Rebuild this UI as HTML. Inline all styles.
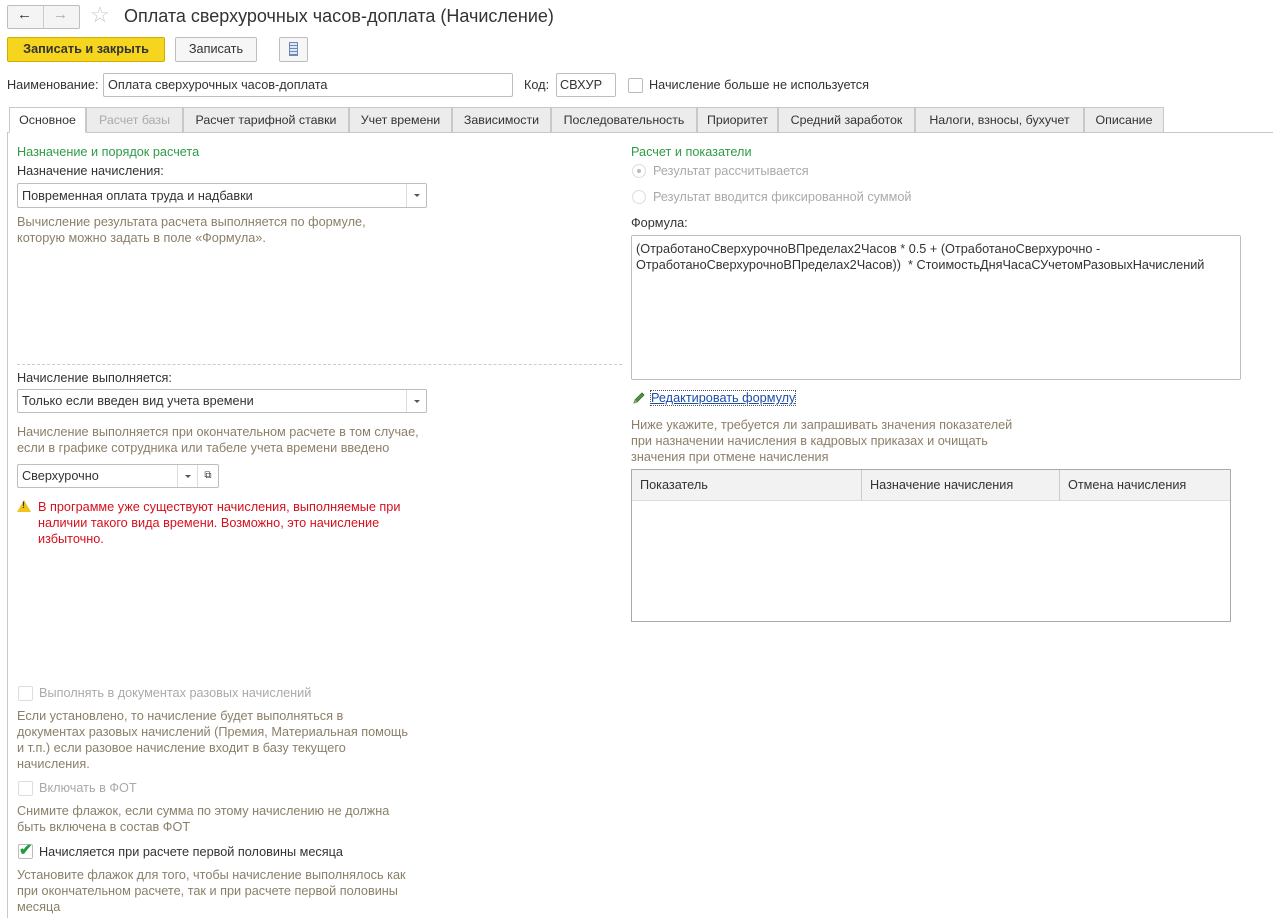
<!DOCTYPE html>
<html><head><meta charset="utf-8"><style>
*{box-sizing:border-box;margin:0;padding:0}
body{width:1273px;height:918px;background:#fff;font-family:"Liberation Sans",Arial,sans-serif;font-size:12.7px;color:#333;position:relative;overflow:hidden}
.a{position:absolute;white-space:nowrap}
.box{position:absolute;border:1px solid #bdbdbd;border-radius:2px;background:#fff}
.g{color:#8b7f68}
.gr{color:#2e9b48}
.dis{color:#aaa}
.red{color:#d6101e}
.tab{position:absolute;top:107px;height:26px;border:1px solid #c8c8c8;background:#ececec;text-align:center;line-height:24px;color:#333;font-size:12.4px}
.cb{position:absolute;width:15px;height:15px;border:1px solid #bbb;border-radius:2px;background:#fff}
.dd{position:absolute;top:0;right:0;width:20px;height:100%;border-left:1px solid #ddd}
.dd:after{content:"";position:absolute;left:7px;top:10px;border-left:3px solid transparent;border-right:3px solid transparent;border-top:3px solid #555}
</style></head><body>
<div class="box" style="left:7px;top:5px;width:73px;height:24px;background:#f4f4f4"></div>
<div class="a" style="left:43px;top:6px;width:1px;height:22px;background:#ccc"></div>
<div class="a" style="left:17px;top:6px;font-size:15px;font-weight:bold;color:#333">&#8592;</div>
<div class="a" style="left:53px;top:6px;font-size:15px;font-weight:bold;color:#aaa">&#8594;</div>
<div class="a" style="left:90px;top:2px;font-size:22px;color:#c8c8c8">&#9734;</div>
<div class="a" style="left:124px;top:6px;font-size:18px;color:#333">Оплата сверхурочных часов-доплата (Начисление)</div>
<div class="a" style="left:7px;top:37px;width:158px;height:25px;background:#f6d51e;border:1px solid #d1ad00;border-radius:2px;text-align:center;line-height:23px;font-weight:bold;color:#333">Записать и закрыть</div>
<div class="box" style="left:175px;top:37px;width:82px;height:25px;text-align:center;line-height:23px;background:#f6f6f6">Записать</div>
<div class="box" style="left:279px;top:37px;width:29px;height:25px;background:#f6f6f6"></div>
<div class="a" style="left:289px;top:42px;width:9px;height:14px;border:1px solid #6b88b6;background:repeating-linear-gradient(#dfe8f5 0 2px,#6b88b6 2px 3px)"></div>
<div class="a" style="left:7px;top:78px">Наименование:</div>
<div class="box" style="left:103px;top:73px;width:410px;height:24px;padding:4px 4px;color:#333">Оплата сверхурочных часов-доплата</div>
<div class="a" style="left:524px;top:78px">Код:</div>
<div class="box" style="left:556px;top:73px;width:60px;height:24px;padding:4px 3px">СВХУР</div>
<div class="cb" style="left:628px;top:78px"></div>
<div class="a" style="left:649px;top:78px">Начисление больше не используется</div>
<div class="a" style="left:7px;top:132px;width:1266px;height:1px;background:#c8c8c8"></div>
<div class="a" style="left:7px;top:132px;width:1px;height:786px;background:#c8c8c8"></div>
<div class="tab" style="left:9px;width:77px;background:#fff;border-bottom-color:#fff">Основное</div>
<div class="tab dis" style="left:86px;width:97px;color:#aaa">Расчет базы</div>
<div class="tab" style="left:183px;width:166px">Расчет тарифной ставки</div>
<div class="tab" style="left:349px;width:103px">Учет времени</div>
<div class="tab" style="left:452px;width:99px">Зависимости</div>
<div class="tab" style="left:551px;width:146px">Последовательность</div>
<div class="tab" style="left:697px;width:81px">Приоритет</div>
<div class="tab" style="left:778px;width:137px">Средний заработок</div>
<div class="tab" style="left:915px;width:169px">Налоги, взносы, бухучет</div>
<div class="tab" style="left:1084px;width:80px">Описание</div>
<div class="a gr" style="left:17px;top:145px">Назначение и порядок расчета</div>
<div class="a" style="left:17px;top:164px">Назначение начисления:</div>
<div class="box" style="left:17px;top:183px;width:410px;height:25px;padding:5px 4px">Повременная оплата труда и надбавки<div class="dd"></div></div>
<div class="a g" style="left:17px;top:214px;line-height:16px">Вычисление результата расчета выполняется по формуле,<br>которую можно задать в поле «Формула».</div>
<div class="a" style="left:17px;top:364px;width:605px;border-top:1px dashed #ccc"></div>
<div class="a" style="left:17px;top:371px">Начисление выполняется:</div>
<div class="box" style="left:17px;top:389px;width:410px;height:24px;padding:4px 4px">Только если введен вид учета времени<div class="dd"></div></div>
<div class="a g" style="left:17px;top:424px;line-height:16px">Начисление выполняется при окончательном расчете в том случае,<br>если в графике сотрудника или табеле учета времени введено</div>
<div class="box" style="left:17px;top:464px;width:202px;height:24px;padding:4px 4px">Сверхурочно<div class="dd" style="right:21px"></div><div style="position:absolute;right:0;top:0;width:21px;height:100%;border-left:1px solid #ddd;text-align:center;font-size:10px;line-height:22px">&#10697;</div></div>
<div class="a" style="left:17px;top:500px;width:0;height:0;border-left:7px solid transparent;border-right:7px solid transparent;border-bottom:12px solid #f0c419"></div>
<div class="a" style="left:22px;top:500px;font-size:9px;font-weight:bold">!</div>
<div class="a red" style="left:38px;top:499px;line-height:16px">В программе уже существуют начисления, выполняемые при<br>наличии такого вида времени. Возможно, это начисление<br>избыточно.</div>
<div class="cb" style="left:18px;top:686px;border-color:#ddd"></div>
<div class="a dis" style="left:39px;top:686px">Выполнять в документах разовых начислений</div>
<div class="a g" style="left:17px;top:708px;line-height:16px">Если установлено, то начисление будет выполняться в<br>документах разовых начислений (Премия, Материальная помощь<br>и т.п.) если разовое начисление входит в базу текущего<br>начисления.</div>
<div class="cb" style="left:18px;top:781px;border-color:#ddd"></div>
<div class="a dis" style="left:39px;top:781px">Включать в ФОТ</div>
<div class="a g" style="left:17px;top:803px;line-height:16px">Снимите флажок, если сумма по этому начислению не должна<br>быть включена в состав ФОТ</div>
<div class="cb" style="left:18px;top:844px"></div>
<div class="a" style="left:19px;top:840px;color:#1e9b3a;font-size:16px;font-weight:bold">&#10004;</div>
<div class="a" style="left:39px;top:845px">Начисляется при расчете первой половины месяца</div>
<div class="a g" style="left:17px;top:867px;line-height:16px">Установите флажок для того, чтобы начисление выполнялось как<br>при окончательном расчете, так и при расчете первой половины<br>месяца</div>
<div class="a gr" style="left:631px;top:145px">Расчет и показатели</div>
<div class="a" style="left:632px;top:164px;width:14px;height:14px;border:1px solid #ddd;border-radius:50%"><div style="margin:4px;width:4px;height:4px;border-radius:50%;background:#bbb"></div></div>
<div class="a dis" style="left:653px;top:164px">Результат рассчитывается</div>
<div class="a" style="left:632px;top:190px;width:14px;height:14px;border:1px solid #ddd;border-radius:50%"></div>
<div class="a dis" style="left:653px;top:190px">Результат вводится фиксированной суммой</div>
<div class="a" style="left:631px;top:216px">Формула:</div>
<div class="box" style="left:631px;top:235px;width:610px;height:145px;padding:5px 4px;line-height:16px;white-space:normal">(ОтработаноСверхурочноВПределах2Часов * 0.5 + (ОтработаноСверхурочно -<br>ОтработаноСверхурочноВПределах2Часов))&nbsp; * СтоимостьДняЧасаСУчетомРазовыхНачислений</div>
<svg class="a" style="left:632px;top:391px" width="14" height="14" viewBox="0 0 14 14"><path d="M2 12 L3 9 L10 2 L12 4 L5 11 Z" fill="#4a9a3a" stroke="#2d6b22" stroke-width="0.8"/><path d="M2 12 L3 9 L5 11 Z" fill="#c9a46a"/></svg>
<div class="a" style="left:651px;top:391px;color:#1d4fa8;text-decoration:underline;outline:1px dotted #555">Редактировать формулу</div>
<div class="a g" style="left:631px;top:417px;line-height:16px">Ниже укажите, требуется ли запрашивать значения показателей<br>при назначении начисления в кадровых приказах и очищать<br>значения при отмене начисления</div>
<div class="a" style="left:631px;top:469px;width:600px;height:153px;border:1px solid #aaa;background:#fff"></div>
<div class="a" style="left:632px;top:470px;width:598px;height:31px;background:#f2f2f2;border-bottom:1px solid #ddd"></div>
<div class="a" style="left:861px;top:470px;width:1px;height:31px;background:#ccc"></div>
<div class="a" style="left:1059px;top:470px;width:1px;height:31px;background:#ccc"></div>
<div class="a" style="left:640px;top:478px">Показатель</div>
<div class="a" style="left:870px;top:478px">Назначение начисления</div>
<div class="a" style="left:1068px;top:478px">Отмена начисления</div>
</body></html>
